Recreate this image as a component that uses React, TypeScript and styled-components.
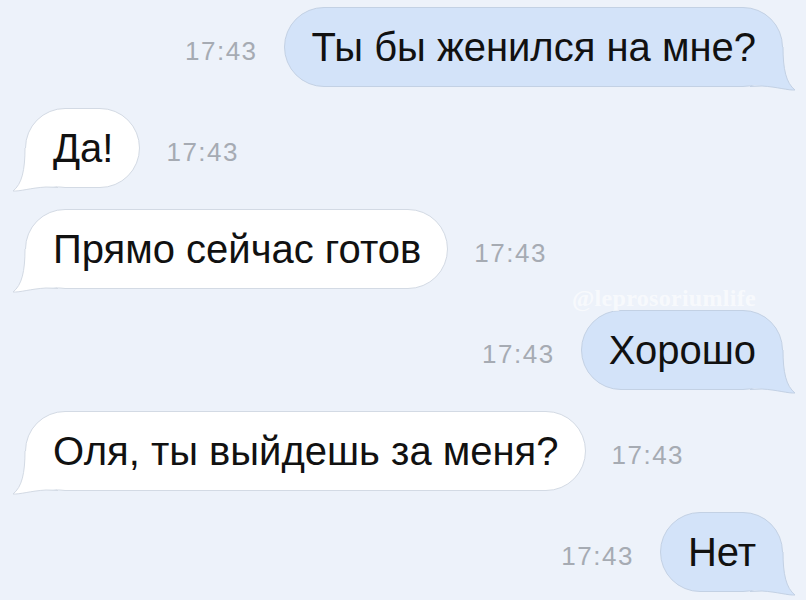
import React from "react";
import styled, { createGlobalStyle } from "styled-components";

const Global = createGlobalStyle`
  html, body { margin: 0; padding: 0; }
  body { background: #edf2fa; font-family: "Liberation Sans", Arial, sans-serif; }
`;

const Page = styled.div`
  position: relative;
  width: 806px;
  height: 600px;
  overflow: hidden;
  background: #edf2fa;
  box-sizing: border-box;
  padding: 7px 23px 0 25px;
`;

const Thread = styled.div`
  display: flex;
  flex-direction: column;
  gap: 21px;
`;

const Row = styled.div<{ $out?: boolean }>`
  display: flex;
  align-items: center;
  flex-direction: ${(p) => (p.$out ? "row-reverse" : "row")};
  gap: 26px;
`;

const Bubble = styled.div<{ $out?: boolean }>`
  position: relative;
  height: 80px;
  box-sizing: border-box;
  padding: 0 26px 0 27px;
  border-radius: 40px;
  display: flex;
  align-items: center;
  font-family: "Liberation Sans", Arial, sans-serif;
  font-size: 40px;
  color: #111;
  white-space: nowrap;
  background: ${(p) => (p.$out ? "#d3e3f9" : "#ffffff")};
  border: 1px solid ${(p) => (p.$out ? "#c3d1e4" : "#d3dae4")};
`;

const Label = styled.span`
  position: relative;
  z-index: 1;
`;

const TailSvg = styled.svg<{ $out?: boolean }>`
  position: absolute;
  bottom: -5px;
  ${(p) => (p.$out ? "right: -14px;" : "left: -14px; transform: scaleX(-1);")}
  overflow: visible;
`;

const Time = styled.span`
  font-family: "Liberation Sans", Arial, sans-serif;
  font-size: 26px;
  letter-spacing: 1.5px;
  color: #a6abb3;
  margin-top: 8px;
`;

const Watermark = styled.div`
  position: absolute;
  left: 572px;
  top: 285px;
  font-family: "Liberation Serif", "Times New Roman", serif;
  font-weight: bold;
  font-size: 24px;
  letter-spacing: 0.3px;
  color: rgba(255, 255, 255, 0.6);
`;

const Tail = ({ out }: { out?: boolean }) => {
  const fill = out ? "#d3e3f9" : "#ffffff";
  const stroke = out ? "#c3d1e4" : "#d3dae4";
  return (
    <TailSvg $out={out} width="50" height="44" viewBox="0 0 50 44">
      <path d="M37 0 C37 22 40 36 49 43 C42 43.5 32 40 16 39 L0 38 L0 0 Z" fill={fill} />
      <path d="M37 0 C37 22 40 36 49 43 C42 43.5 32 40 16 39 L4 39.5" fill="none" stroke={stroke} strokeWidth="1" />
    </TailSvg>
  );
};

type Msg = { text: string; out: boolean };

const messages: Msg[] = [
  { text: "Ты бы женился на мне?", out: true },
  { text: "Да!", out: false },
  { text: "Прямо сейчас готов", out: false },
  { text: "Хорошо", out: true },
  { text: "Оля, ты выйдешь за меня?", out: false },
  { text: "Нет", out: true },
];

export default function App() {
  return (
    <>
      <Global />
      <Page>
        <Thread>
          {messages.map((m, i) => (
            <Row key={i} $out={m.out}>
              <Bubble $out={m.out}>
                <Label>{m.text}</Label>
                <Tail out={m.out} />
              </Bubble>
              <Time>17:43</Time>
            </Row>
          ))}
        </Thread>
        <Watermark>@leprosoriumlife</Watermark>
      </Page>
    </>
  );
}
